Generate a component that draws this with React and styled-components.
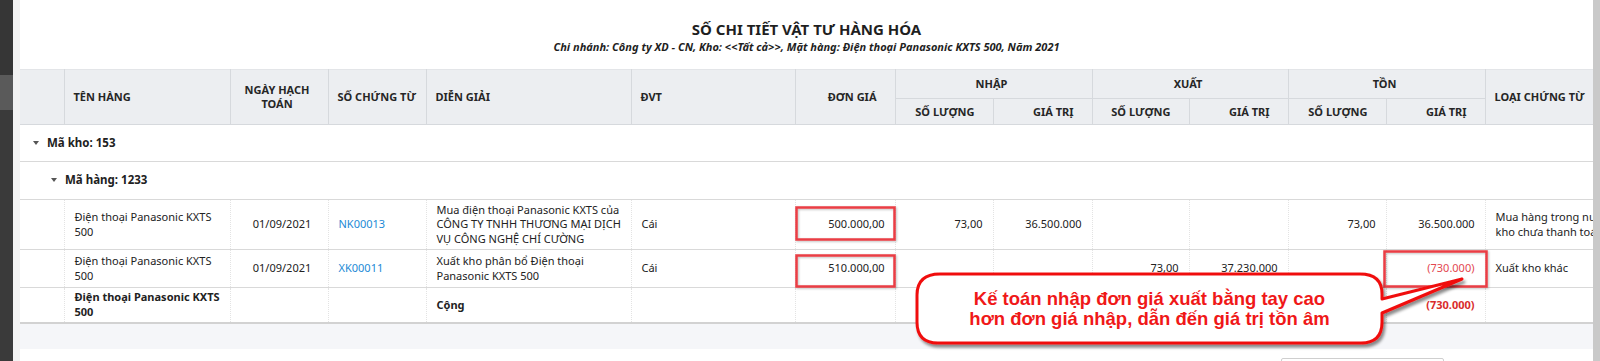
import React from 'react'
import styled, { createGlobalStyle } from 'styled-components'

const GlobalStyle = createGlobalStyle`
  html, body {
    margin: 0;
    padding: 0;
  }
  body {
    font-family: "Noto Sans", "Open Sans", sans-serif;
    color: #212121;
    background: #fff;
  }
`

const cols = [44, 166, 98, 98, 205, 164, 100, 98, 99, 97, 99, 98, 99, 200]

const productName = ['Điện thoại Panasonic KXTS', '500']

const rows = [
  {
    date: '01/09/2021',
    doc: 'NK00013',
    desc: ['Mua điện thoại Panasonic KXTS của', 'CÔNG TY TNHH THƯƠNG MẠI DỊCH', 'VỤ CÔNG NGHỆ CHÍ CƯỜNG'],
    unit: 'Cái',
    price: '500.000,00',
    inQty: '73,00',
    inVal: '36.500.000',
    outQty: '',
    outVal: '',
    stQty: '73,00',
    stVal: '36.500.000',
    kind: ['Mua hàng trong nước nhập', 'kho chưa thanh toán'],
    height: 50,
  },
  {
    date: '01/09/2021',
    doc: 'XK00011',
    desc: ['Xuất kho phân bổ Điện thoại', 'Panasonic KXTS 500'],
    unit: 'Cái',
    price: '510.000,00',
    inQty: '',
    inVal: '',
    outQty: '73,00',
    outVal: '37.230.000',
    stQty: '',
    stVal: '(730.000)',
    negative: true,
    kind: ['Xuất kho khác'],
    height: 38,
  },
]

const Lines = ({ items }) =>
  items.map((t, i) => (
    <React.Fragment key={i}>
      {i > 0 && <br />}
      {t}
    </React.Fragment>
  ))

const Page = styled.div`
  position: relative;
  display: flex;
  width: 1600px;
  height: 361px;
  overflow: hidden;
`

const DarkStrip = styled.div`
  width: 13px;
  flex-shrink: 0;
  background: linear-gradient(#363636 0 75px, #5a5a5a 75px 110px, #3a3a3a 110px);
`

const Gutter = styled.div`
  width: 7px;
  flex-shrink: 0;
  background: #f3f3f3;
`

const Main = styled.div`
  flex: 1;
  min-width: 0;
  display: flex;
  flex-direction: column;
  overflow: hidden;
  background: #fff;
  & > * {
    flex-shrink: 0;
  }
`

const Scrollbar = styled.div`
  width: 7px;
  flex-shrink: 0;
  background: #c9c9c9;
`

const TitleBlock = styled.div`
  height: 69px;
  box-sizing: border-box;
  padding-top: 19px;
  display: flex;
  flex-direction: column;
  align-items: center;
`

const Title = styled.div`
  font-size: 15px;
  font-weight: 700;
  line-height: 20px;
  color: #1f1f1f;
`

const Subtitle = styled.div`
  font-size: 11px;
  font-style: italic;
  font-weight: 700;
  line-height: 15px;
  color: #1f1f1f;
`

const Grid = styled.table`
  border-collapse: collapse;
  table-layout: fixed;
  width: ${cols.reduce((a, b) => a + b, 0)}px;
  font-size: 11px;
  line-height: 14.5px;
`

const HeadRow = styled.tr`
  height: ${p => p.$h}px;
`

const Th = styled.th`
  background: #eceef1;
  border: 1px solid #d6d9dd;
  border-top-color: #e3e5e8;
  font-weight: 700;
  font-size: 11px;
  line-height: 14px;
  color: #262626;
  white-space: nowrap;
  text-align: ${p => p.$align || 'left'};
  padding: 0 ${p => (p.$align === 'right' ? '18px' : '8px')} 0 ${p => (p.$align === 'center' ? '4px' : '9px')};
  &:first-child {
    border-left: none;
  }
`

const GroupRow = styled.tr`
  height: ${p => p.$h}px;
  border-bottom: 1px solid #d9d9d9;
`

const GroupCell = styled.td`
  padding: 0 0 0 ${p => p.$indent}px;
  font-weight: 700;
  font-size: 11.5px;
`

const Caret = styled.span`
  display: inline-block;
  width: 0;
  height: 0;
  border-left: 3px solid transparent;
  border-right: 3px solid transparent;
  border-top: 4px solid #555;
  margin-right: 8px;
  vertical-align: 2px;
`

const BodyRow = styled.tr`
  height: ${p => p.$h}px;
  border-bottom: ${p => (p.$total ? '2px solid #d2d2d2' : '1px solid #d9d9d9')};
  font-weight: ${p => (p.$total ? 700 : 400)};
`

const Td = styled.td`
  padding: 0 ${p => (p.$align === 'right' ? '10px' : '4px')} 0 10px;
  border-left: 1px dotted #e3e3e3;
  text-align: ${p => p.$align || 'left'};
  vertical-align: middle;
  white-space: nowrap;
  overflow: hidden;
  color: ${p => (p.$negative ? (p.$bold ? '#d92b2b' : '#e3474f') : '#222')};
  &:first-child {
    border-left: none;
  }
`

const DocLink = styled.a`
  color: #1d8ad6;
  text-decoration: none;
`

const FooterBand = styled.div`
  height: 25px;
  background: #f5f6f9;
`

const Pager = styled.div`
  flex: 1;
  display: flex;
  justify-content: flex-end;
  align-items: flex-start;
  padding: 9px 149px 0 0;
`

const PageBox = styled.div`
  width: 161px;
  height: 20px;
  border: 1px solid #cfcfcf;
  border-radius: 2px;
  background: #fff;
`

const Overlay = styled.svg`
  position: absolute;
  left: 0;
  top: 0;
  pointer-events: none;
`

const Callout = styled.div`
  position: absolute;
  left: 917px;
  top: 274px;
  width: 465px;
  height: 69px;
  display: flex;
  align-items: center;
  justify-content: center;
  text-align: center;
  font-family: "Liberation Sans", Arial, sans-serif;
  font-weight: 700;
  font-size: 18.5px;
  line-height: 20px;
  color: #f01818;
`

const Row = ({ r }) => (
  <BodyRow $h={r.height}>
    <Td />
    <Td><Lines items={productName} /></Td>
    <Td $align="center">{r.date}</Td>
    <Td><DocLink>{r.doc}</DocLink></Td>
    <Td><Lines items={r.desc} /></Td>
    <Td>{r.unit}</Td>
    <Td $align="right">{r.price}</Td>
    <Td $align="right">{r.inQty}</Td>
    <Td $align="right">{r.inVal}</Td>
    <Td $align="right">{r.outQty}</Td>
    <Td $align="right">{r.outVal}</Td>
    <Td $align="right">{r.stQty}</Td>
    <Td $align="right" $negative={r.negative}>{r.stVal}</Td>
    <Td><Lines items={r.kind} /></Td>
  </BodyRow>
)

const App = () => {
  return (
    <>
      <GlobalStyle />
      <Page>
        <DarkStrip />
        <Gutter />
        <Main>
          <TitleBlock>
            <Title>SỐ CHI TIẾT VẬT TƯ HÀNG HÓA</Title>
            <Subtitle>
              Chi nhánh: Công ty XD - CN, Kho: &lt;&lt;Tất cả&gt;&gt;, Mặt hàng: Điện thoại Panasonic KXTS 500, Năm 2021
            </Subtitle>
          </TitleBlock>
          <Grid>
            <colgroup>
              {cols.map((w, i) => (
                <col key={i} style={{ width: w }} />
              ))}
            </colgroup>
            <thead>
              <HeadRow $h={29}>
                <Th rowSpan={2} />
                <Th rowSpan={2}>TÊN HÀNG</Th>
                <Th rowSpan={2} $align="center">NGÀY HẠCH<br />TOÁN</Th>
                <Th rowSpan={2}>SỐ CHỨNG TỪ</Th>
                <Th rowSpan={2}>DIỄN GIẢI</Th>
                <Th rowSpan={2}>ĐVT</Th>
                <Th rowSpan={2} $align="right">ĐƠN GIÁ</Th>
                <Th colSpan={2} $align="center">NHẬP</Th>
                <Th colSpan={2} $align="center">XUẤT</Th>
                <Th colSpan={2} $align="center">TỒN</Th>
                <Th rowSpan={2}>LOẠI CHỨNG TỪ</Th>
              </HeadRow>
              <HeadRow $h={26}>
                <Th $align="right">SỐ LƯỢNG</Th>
                <Th $align="right">GIÁ TRỊ</Th>
                <Th $align="right">SỐ LƯỢNG</Th>
                <Th $align="right">GIÁ TRỊ</Th>
                <Th $align="right">SỐ LƯỢNG</Th>
                <Th $align="right">GIÁ TRỊ</Th>
              </HeadRow>
            </thead>
            <tbody>
              <GroupRow $h={37}>
                <GroupCell colSpan={14} $indent={13}>
                  <Caret />Mã kho: 153
                </GroupCell>
              </GroupRow>
              <GroupRow $h={38}>
                <GroupCell colSpan={14} $indent={31}>
                  <Caret />Mã hàng: 1233
                </GroupCell>
              </GroupRow>
              {rows.map((r, i) => (
                <Row key={i} r={r} />
              ))}
              <BodyRow $h={35} $total>
                <Td />
                <Td><Lines items={productName} /></Td>
                <Td />
                <Td />
                <Td>Cộng</Td>
                <Td />
                <Td />
                <Td />
                <Td />
                <Td />
                <Td />
                <Td />
                <Td $align="right" $negative $bold>(730.000)</Td>
                <Td />
              </BodyRow>
            </tbody>
          </Grid>
          <FooterBand />
          <Pager>
            <PageBox />
          </Pager>
        </Main>
        <Scrollbar />

        <Overlay width="1600" height="361" viewBox="0 0 1600 361">
          <defs>
            <filter id="soft" x="-10%" y="-10%" width="120%" height="130%">
              <feDropShadow dx="1" dy="1" stdDeviation="1" floodColor="#000" floodOpacity="0.25" />
            </filter>
            <filter id="bubble" x="-10%" y="-20%" width="120%" height="150%">
              <feDropShadow dx="2" dy="3" stdDeviation="1.5" floodColor="#000" floodOpacity="0.45" />
            </filter>
          </defs>
          <g fill="none" stroke="#ea3d44" strokeWidth="2.5" filter="url(#soft)">
            <rect x="796.5" y="207.5" width="98" height="32" />
            <rect x="796.5" y="255.5" width="98" height="31" />
            <rect x="1384.5" y="251.5" width="102" height="35" />
          </g>
          <path
            d="M940 274 H1360 Q1382 274 1382 294 V299 L1462 279 L1382 313 V322 Q1382 343 1361 343 H938 Q917 343 917 322 V295 Q917 274 940 274 Z"
            fill="#fff"
            stroke="#f01010"
            strokeWidth="3"
            strokeLinejoin="round"
            filter="url(#bubble)"
          />
        </Overlay>
        <Callout>
          Kế toán nhập đơn giá xuất bằng tay cao<br />
          hơn đơn giá nhập, dẫn đến giá trị tồn âm
        </Callout>
      </Page>
    </>
  )
}

export default App
